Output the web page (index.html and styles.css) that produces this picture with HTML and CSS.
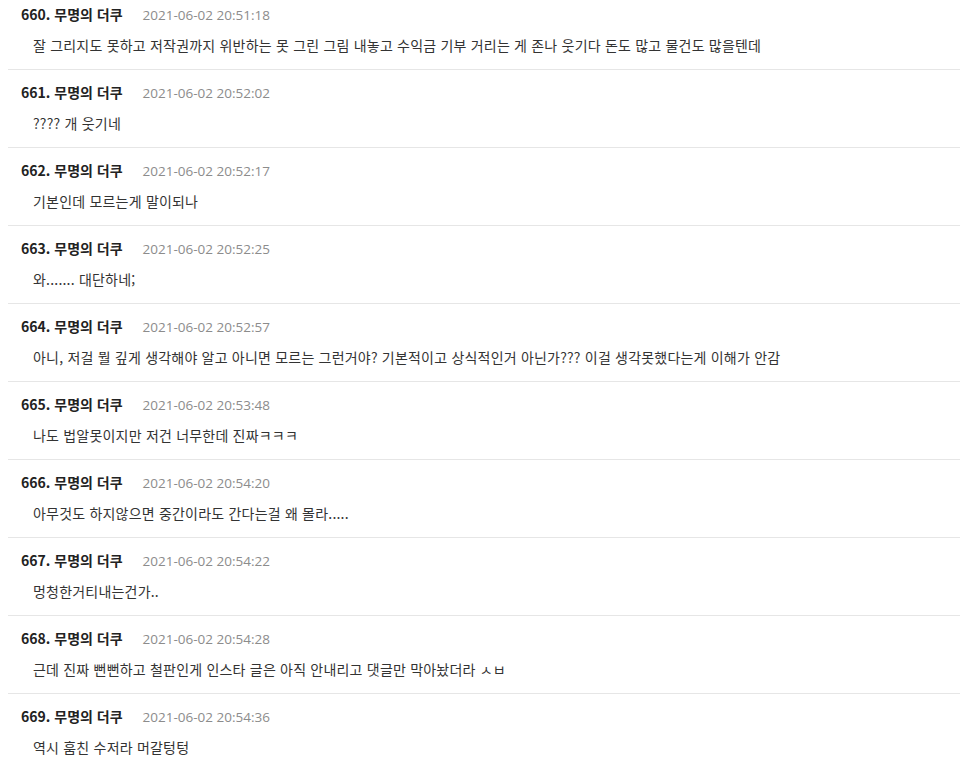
FILE: index.html
```html
<!DOCTYPE html>
<html lang="ko">
<head>
<meta charset="utf-8">
<link rel="stylesheet" href="styles.css">
</head>
<body>
<ul class="comments">
  <li class="comment"><div class="meta"><span class="name">660. 무명의 더쿠</span><span class="date">2021-06-02 20:51:18</span></div><p class="text">잘 그리지도 못하고 저작권까지 위반하는 못 그린 그림 내놓고 수익금 기부 거리는 게 존나 웃기다 돈도 많고 물건도 많을텐데</p></li>
  <li class="comment"><div class="meta"><span class="name">661. 무명의 더쿠</span><span class="date">2021-06-02 20:52:02</span></div><p class="text">???? 개 웃기네</p></li>
  <li class="comment"><div class="meta"><span class="name">662. 무명의 더쿠</span><span class="date">2021-06-02 20:52:17</span></div><p class="text">기본인데 모르는게 말이되나</p></li>
  <li class="comment"><div class="meta"><span class="name">663. 무명의 더쿠</span><span class="date">2021-06-02 20:52:25</span></div><p class="text">와....... 대단하네;</p></li>
  <li class="comment"><div class="meta"><span class="name">664. 무명의 더쿠</span><span class="date">2021-06-02 20:52:57</span></div><p class="text">아니, 저걸 뭘 깊게 생각해야 알고 아니면 모르는 그런거야? 기본적이고 상식적인거 아닌가??? 이걸 생각못했다는게 이해가 안감</p></li>
  <li class="comment"><div class="meta"><span class="name">665. 무명의 더쿠</span><span class="date">2021-06-02 20:53:48</span></div><p class="text">나도 법알못이지만 저건 너무한데 진짜ㅋㅋㅋ</p></li>
  <li class="comment"><div class="meta"><span class="name">666. 무명의 더쿠</span><span class="date">2021-06-02 20:54:20</span></div><p class="text">아무것도 하지않으면 중간이라도 간다는걸 왜 몰라.....</p></li>
  <li class="comment"><div class="meta"><span class="name">667. 무명의 더쿠</span><span class="date">2021-06-02 20:54:22</span></div><p class="text">멍청한거티내는건가..</p></li>
  <li class="comment"><div class="meta"><span class="name">668. 무명의 더쿠</span><span class="date">2021-06-02 20:54:28</span></div><p class="text">근데 진짜 뻔뻔하고 철판인게 인스타 글은 아직 안내리고 댓글만 막아놨더라 ㅅㅂ</p></li>
  <li class="comment"><div class="meta"><span class="name">669. 무명의 더쿠</span><span class="date">2021-06-02 20:54:36</span></div><p class="text">역시 훔친 수저라 머갈텅텅</p></li>
</ul>
</body>
</html>
```
FILE: styles.css
```css
html, body {
  margin: 0;
  padding: 0;
  background: #ffffff;
}
body {
  font-family: "Noto Sans CJK KR", "Noto Sans", sans-serif;
  overflow: hidden;
}
.comments {
  list-style: none;
  margin: -8px 0 0 8px;
  padding: 0;
}
.comment {
  padding: 12px 0 14px 13px;
  border-bottom: 1px solid #e6e6e6;
}
.meta {
  display: flex;
  align-items: baseline;
  gap: 20px;
  height: 20px;
  line-height: 20px;
}
.name {
  font-size: 14px;
  font-weight: 700;
  color: #222222;
}
.date {
  font-family: "Open Sans", "Noto Sans CJK KR", sans-serif;
  font-size: 13.5px;
  color: #8c8c8c;
}
.text {
  margin: 11px 0 0 12px;
  font-size: 14px;
  letter-spacing: 0.2px;
  line-height: 20px;
  color: #333333;
}
```
